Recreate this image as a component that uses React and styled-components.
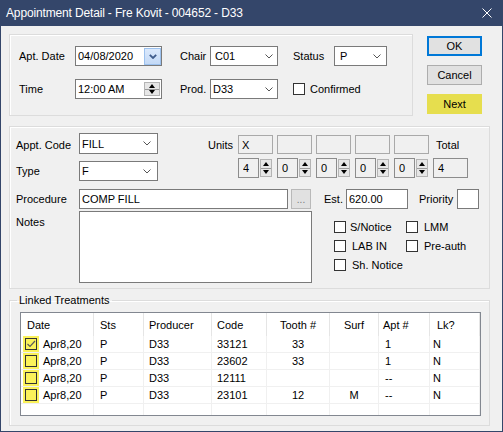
import React from 'react';
import styled, { createGlobalStyle } from 'styled-components';

const GlobalStyle = createGlobalStyle`
  html, body {
    margin: 0;
    padding: 0;
    background: #f0f0f0;
  }
  body {
    font-family: "Liberation Sans", Arial, sans-serif;
    font-size: 11px;
    color: #000;
  }
`;

const Window = styled.div`
  width: 503px;
  height: 432px;
  box-sizing: border-box;
  border: 1px solid #34466a;
  border-top: none;
  background: #f0f0f0;
  display: flex;
  flex-direction: column;
  overflow: hidden;
`;

const TitleBar = styled.div`
  height: 26px;
  flex: none;
  background: #34466a;
  color: #fff;
  display: flex;
  align-items: center;
  justify-content: space-between;
  padding: 0 10px 0 5px;
  font-size: 12px;
  letter-spacing: -0.15px;
`;

const Body = styled.div`
  padding: 8px 0 0 8px;
  display: flex;
  flex-direction: column;
`;

const TopRow = styled.div`
  display: flex;
  gap: 14px;
`;

const Group = styled.div`
  box-sizing: border-box;
  width: ${p => p.$w}px;
  height: ${p => p.$h}px;
  margin-top: ${p => p.$mt || 0}px;
  border: 1px solid #dcdcdc;
  box-shadow: inset 1px 1px 0 #fff;
`;

const TopGrid = styled.div`
  display: grid;
  grid-template-columns: 56px 87px 18px 30px 68px 15px 41px 53px;
  grid-template-rows: 20px 20px;
  row-gap: 13px;
  align-items: center;
  padding: 11px 0 0 9px;
`;

const Label = styled.span`
  white-space: nowrap;
  padding-top: ${p => p.$pt || 0}px;
  padding-left: ${p => p.$pl || 0}px;
  grid-column: ${p => p.$col || 'auto'};
`;

const Field = styled.div`
  box-sizing: border-box;
  width: ${p => p.$w}px;
  height: ${p => p.$h || 20}px;
  flex: none;
  border: 1px solid ${p => p.$border || '#7a7a7a'};
  background: ${p => p.$bg || '#fff'};
  display: flex;
  align-items: center;
  padding-left: ${p => p.$pl ?? 2}px;
  padding-right: ${p => p.$pr ?? 0}px;
  grid-column: ${p => p.$col || 'auto'};
`;

const FieldText = styled.span`
  flex: 1;
  white-space: nowrap;
  overflow: hidden;
`;

const PickerButton = styled.span`
  box-sizing: border-box;
  width: 17px;
  height: 17px;
  margin-right: 0;
  border: 1px solid #9cc1ee;
  background: linear-gradient(#dbe9fc, #c3d9f6);
  display: flex;
  align-items: center;
  justify-content: center;
`;

const SpinBox = styled.span`
  box-sizing: border-box;
  width: ${p => p.$w || 12}px;
  height: ${p => p.$h || 18}px;
  margin-right: ${p => p.$mr || 0}px;
  flex: none;
  background: #e6e6e6;
  border: 1px solid #b4b4b4;
  display: flex;
  flex-direction: column;
`;

const SpinHalf = styled.span`
  flex: 1;
  display: flex;
  align-items: center;
  justify-content: center;
  & + & {
    border-top: 1px solid #9a9a9a;
  }
`;

const Arrow = styled.span`
  width: 0;
  height: 0;
  border-left: 3.5px solid transparent;
  border-right: 3.5px solid transparent;
  ${p => (p.$down ? 'border-top: 4px solid #000;' : 'border-bottom: 4px solid #000;')}
`;

const ButtonColumn = styled.div`
  display: flex;
  flex-direction: column;
  gap: 9px;
  padding-top: 2px;
`;

const WinButton = styled.div`
  box-sizing: border-box;
  width: 55px;
  height: 20px;
  display: flex;
  align-items: center;
  justify-content: center;
  background: ${p => (p.$variant === 'next' ? '#e6de4e' : '#e1e1e1')};
  border: ${p =>
    p.$variant === 'default'
      ? '2px solid #0078d7'
      : p.$variant === 'next'
      ? '1px solid #e6de4e'
      : '1px solid #adadad'};
`;

const CheckRow = styled.div`
  display: flex;
  align-items: center;
  gap: ${p => p.$gap || 5}px;
  height: 13px;
  grid-column: ${p => p.$col || 'auto'};
  white-space: nowrap;
`;

const Box = styled.span`
  box-sizing: border-box;
  width: ${p => p.$s || 12}px;
  height: ${p => p.$s || 12}px;
  flex: none;
  border: 1px solid #333;
  background: ${p => p.$bg || '#fff'};
  display: flex;
  align-items: center;
  justify-content: center;
`;

const TopSection = styled.div`
  display: flex;
  align-items: flex-start;
`;

const LeftFields = styled.div`
  display: grid;
  grid-template-columns: 63px 79px;
  grid-template-rows: 21px 20px;
  row-gap: 7px;
  align-items: center;
`;

const UnitsGrid = styled.div`
  margin: 2px 0 0 50px;
  display: grid;
  grid-template-columns: 26px repeat(6, 35px);
  grid-template-rows: 19px 20px;
  column-gap: 4px;
  row-gap: 4px;
  align-items: center;
`;

const UnitSpin = styled.div`
  display: flex;
  align-items: center;
  gap: 1px;
`;

const DetailsInner = styled.div`
  padding: 6px 0 0 6px;
  display: flex;
  flex-direction: column;
`;

const FieldRow = styled.div`
  display: flex;
  align-items: ${p => p.$align || 'center'};
  margin-top: ${p => p.$mt || 0}px;
`;

const RowLabel = styled.span`
  width: ${p => p.$w}px;
  flex: none;
  margin-left: ${p => p.$ml || 0}px;
  padding-top: ${p => p.$pt || 0}px;
  line-height: 13px;
  white-space: nowrap;
`;

const EllipsisButton = styled.div`
  box-sizing: border-box;
  width: 20px;
  height: 20px;
  margin-left: 3px;
  border: 1px solid #b9b9b9;
  background: #e1e1e1;
  color: #7a7a7a;
  display: flex;
  align-items: flex-end;
  justify-content: center;
  padding-bottom: 4px;
  font-size: 10px;
  line-height: 8px;
`;

const NotesBox = styled.div`
  box-sizing: border-box;
  width: 233px;
  height: 72px;
  flex: none;
  border: 1px solid #7a7a7a;
  background: #fff;
`;

const CheckGrid = styled.div`
  margin: 9px 0 0 22px;
  display: grid;
  grid-template-columns: 72px auto;
  row-gap: 6px;
`;

const Fieldset = styled.fieldset`
  box-sizing: border-box;
  width: 481px;
  margin: 5px 0 0 0;
  padding: 5px 0 9px 10px;
  border: 1px solid #dcdcdc;
  box-shadow: inset 1px 1px 0 #fff;
  min-width: 0;
`;

const Legend = styled.legend`
  padding: 0 2px;
  margin-left: -3px;
  line-height: 13px;
  font-size: 11px;
`;

const Table = styled.div`
  box-sizing: border-box;
  width: 461px;
  height: 104px;
  border: 1px solid #828790;
  background: #fff;
  overflow: hidden;
`;

const TableRow = styled.div`
  display: grid;
  grid-template-columns: ${p => p.$cols};
  height: ${p => p.$h}px;
  box-sizing: border-box;
  border-bottom: ${p => (p.$head ? 'none' : '1px solid #f0f0f0')};
`;

const Cell = styled.div`
  box-sizing: border-box;
  border-right: 1px solid ${p => (p.$head ? '#e5e5e5' : '#f0f0f0')};
  display: flex;
  align-items: center;
  justify-content: ${p => (p.$center ? 'center' : 'flex-start')};
  padding-left: ${p => (p.$center ? 0 : p.$pl || 0)}px;
  white-space: nowrap;
  overflow: hidden;
`;

const Flag = styled.span`
  width: 16px;
  height: 16px;
  flex: none;
  background: #fbf25a;
  display: flex;
  align-items: center;
  justify-content: center;
  margin-right: 4px;
`;

const Chevron = ({ mr = 5 }) => (
  <svg width="8" height="5" viewBox="0 0 8 5" style={{ marginRight: mr, flex: 'none' }}>
    <polyline points="0.5,0.5 4,4 7.5,0.5" fill="none" stroke="#555" strokeWidth="1" />
  </svg>
);

const Combo = ({ w, h, value, pl = 2, mr = 5 }) => (
  <Field $w={w} $h={h} $pl={pl}>
    <FieldText>{value}</FieldText>
    <Chevron mr={mr} />
  </Field>
);

const Spinner = ({ w, h, mr }) => (
  <SpinBox $w={w} $h={h} $mr={mr}>
    <SpinHalf>
      <Arrow />
    </SpinHalf>
    <SpinHalf>
      <Arrow $down />
    </SpinHalf>
  </SpinBox>
);

const Check = ({ label, size, gap, col, bg }) => (
  <CheckRow $gap={gap} $col={col}>
    <Box $s={size} $bg={bg} />
    {label}
  </CheckRow>
);

const columns = [
  { key: 'date', title: 'Date', w: 73, hp: 6, cp: 2 },
  { key: 'sts', title: 'Sts', w: 50, hp: 6, cp: 6 },
  { key: 'prod', title: 'Producer', w: 68, hp: 5, cp: 5 },
  { key: 'code', title: 'Code', w: 55, hp: 5, cp: 5 },
  { key: 'tooth', title: 'Tooth #', w: 63, center: true },
  { key: 'surf', title: 'Surf', w: 49, center: true },
  { key: 'apt', title: 'Apt #', w: 51, hp: 4, cp: 6 },
  { key: 'lk', title: 'Lk?', w: 50, hp: 7, cp: 3 },
];

const gridCols = columns.map(c => `${c.w}px`).join(' ') + ' 1fr';

const treatments = [
  { checked: true, date: 'Apr8,20', sts: 'P', prod: 'D33', code: '33121', tooth: '33', surf: '', apt: '1', lk: 'N' },
  { checked: false, date: 'Apr8,20', sts: 'P', prod: 'D33', code: '23602', tooth: '33', surf: '', apt: '1', lk: 'N' },
  { checked: false, date: 'Apr8,20', sts: 'P', prod: 'D33', code: '12111', tooth: '', surf: '', apt: '--', lk: 'N' },
  { checked: false, date: 'Apr8,20', sts: 'P', prod: 'D33', code: '23101', tooth: '12', surf: 'M', apt: '--', lk: 'N' },
];

const App = () => {
  return (
    <>
      <GlobalStyle />
      <Window>
        <TitleBar>
          <span>Appointment Detail - Fre Kovit - 004652 - D33</span>
          <svg width="10" height="10" viewBox="0 0 10 10">
            <path d="M0.5 0.5 L9.5 9.5 M9.5 0.5 L0.5 9.5" stroke="#fff" strokeWidth="1" />
          </svg>
        </TitleBar>

        <Body>
          <TopRow>
            <Group $w={404} $h={82}>
              <TopGrid>
                <Label>Apt. Date</Label>
                <Field $w={87}>
                  <FieldText>04/08/2020</FieldText>
                  <PickerButton>
                    <svg width="8" height="5" viewBox="0 0 8 5">
                      <polyline points="0.8,0.8 4,4 7.2,0.8" fill="none" stroke="#3f5c8c" strokeWidth="1.8" />
                    </svg>
                  </PickerButton>
                </Field>
                <Label $col="4">Chair</Label>
                <Combo w={68} value="C01" pl={4} mr={4} />
                <Label $col="7">Status</Label>
                <Combo w={53} value="P" pl={5} mr={5} />

                <Label $pt={0}>Time</Label>
                <Field $w={87}>
                  <FieldText>12:00 AM</FieldText>
                  <Spinner w={16} h={14} mr={1} />
                </Field>
                <Label $col="4">Prod.</Label>
                <Combo w={68} value="D33" pl={2} mr={4} />
                <Check label="Confirmed" size={12} gap={5} col="7 / span 2" />
              </TopGrid>
            </Group>

            <ButtonColumn>
              <WinButton $variant="default">OK</WinButton>
              <WinButton>Cancel</WinButton>
              <WinButton $variant="next">Next</WinButton>
            </ButtonColumn>
          </TopRow>

          <Group $w={481} $h={163} $mt={10}>
            <DetailsInner>
              <TopSection>
                <LeftFields>
                  <Label $pt={3}>Appt. Code</Label>
                  <Combo w={79} h={21} value="FILL" mr={6} />
                  <Label>Type</Label>
                  <Combo w={79} h={20} value="F" mr={6} />
                </LeftFields>

                <UnitsGrid>
                  <Label>Units</Label>
                  {['X', '', '', '', ''].map((v, i) => (
                    <Field key={i} $w={35} $h={19} $bg="#f0f0f0" $border="#a9a9a9" $pl={3}>
                      <FieldText>{v}</FieldText>
                    </Field>
                  ))}
                  <Label $pl={3}>Total</Label>

                  <span />
                  {['4', '0', '0', '0', '0'].map((v, i) => (
                    <UnitSpin key={i}>
                      <Field $w={21} $h={20} $bg="#f0f0f0" $border="#8c8c8c" $pl={4}>
                        <FieldText>{v}</FieldText>
                      </Field>
                      <Spinner w={12} h={18} />
                    </UnitSpin>
                  ))}
                  <Field $w={35} $h={20} $bg="#f0f0f0" $border="#8c8c8c" $pl={4}>
                    <FieldText>4</FieldText>
                  </Field>
                </UnitsGrid>
              </TopSection>

              <FieldRow $mt={8}>
                <RowLabel $w={63}>Procedure</RowLabel>
                <Field $w={209}>
                  <FieldText>COMP FILL</FieldText>
                </Field>
                <EllipsisButton>...</EllipsisButton>
                <RowLabel $w={22} $ml={13}>Est.</RowLabel>
                <Field $w={62}>
                  <FieldText>620.00</FieldText>
                </Field>
                <RowLabel $w={38} $ml={11}>Priority</RowLabel>
                <Field $w={22} />
              </FieldRow>

              <FieldRow $mt={2} $align="flex-start">
                <RowLabel $w={63} $pt={5}>Notes</RowLabel>
                <NotesBox />
                <CheckGrid>
                  <Check label="S/Notice" size={12} gap={4} />
                  <Check label="LMM" size={12} gap={6} />
                  <Check label="LAB IN" size={12} gap={6} />
                  <Check label="Pre-auth" size={12} gap={6} />
                  <Check label="Sh. Notice" size={12} gap={6} />
                </CheckGrid>
              </FieldRow>
            </DetailsInner>
          </Group>

          <Fieldset>
            <Legend>Linked Treatments</Legend>
            <Table>
              <TableRow $cols={gridCols} $h={23} $head>
                {columns.map(c => (
                  <Cell key={c.key} $head $center={c.center} $pl={c.hp}>
                    {c.title}
                  </Cell>
                ))}
                <Cell $head />
              </TableRow>

              {treatments.map((t, i) => (
                <TableRow key={i} $cols={gridCols} $h={17}>
                  {columns.map(c => (
                    <Cell key={c.key} $center={c.center} $pl={c.cp}>
                      {c.key === 'date' && (
                        <Flag>
                          <Box $s={12} $bg="transparent">
                            {t.checked && (
                              <svg width="10" height="10" viewBox="0 0 10 10">
                                <polyline points="1.5,5 4,7.5 9,2" fill="none" stroke="#5a5a5a" strokeWidth="1.2" />
                              </svg>
                            )}
                          </Box>
                        </Flag>
                      )}
                      {t[c.key]}
                    </Cell>
                  ))}
                  <Cell />
                </TableRow>
              ))}

              <TableRow $cols={gridCols} $h={17}>
                {columns.map(c => (
                  <Cell key={c.key} />
                ))}
                <Cell />
              </TableRow>
            </Table>
          </Fieldset>
        </Body>
      </Window>
    </>
  );
};

export default App;
